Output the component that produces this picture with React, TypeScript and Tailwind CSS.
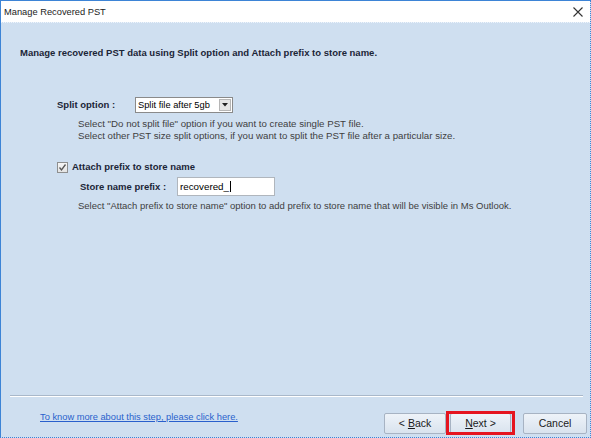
import React from "react";

const font = { fontFamily: '"Liberation Sans", Arial, sans-serif' };

function Btn({ children, w }: { children: React.ReactNode; w: string }) {
  return (
    <div
      className={`${w} h-[21px] flex items-center justify-center border border-[#a7b3c3] rounded-[2px] bg-gradient-to-b from-[#eef3f9] to-[#d9e3ee] text-[10.5px] text-[#1a1a1a]`}
    >
      {children}
    </div>
  );
}

export default function App() {
  return (
    <div
      style={font}
      className="w-[591px] h-[438px] flex flex-col bg-[#cfdff0] border-t border-l border-r border-b border-[#3d84d6] [border-right-style:dotted] [border-bottom-style:dotted] overflow-hidden"
    >
      {/* Title bar */}
      <div className="h-[21px] bg-white flex items-center justify-between pl-[3px] pr-[7px] shrink-0">
        <span className="text-[9.3px] leading-[12px] text-[#222]">Manage Recovered PST</span>
        <svg width="10" height="10" viewBox="0 0 10 10">
          <path d="M0.5 0.5 L9.5 9.5 M9.5 0.5 L0.5 9.5" stroke="#333" strokeWidth="1.1" fill="none" />
        </svg>
      </div>
      <div className="h-px shrink-0 border-b border-dotted border-[#eef4fb]" />

      {/* Body */}
      <div className="flex-1 flex flex-col">
        <div className="pt-[24px] pl-[19px] text-[9.5px] leading-[12px] font-bold text-[#1b2537]">
          Manage recovered PST data using Split option and Attach prefix to store name.
        </div>

        {/* Split option row */}
        <div className="mt-[38px] pl-[56px] flex items-center h-[16px]">
          <span className="w-[78px] text-[9.5px] font-bold text-[#1b2537] leading-[12px]">Split option :</span>
          <div className="w-[98px] h-[16px] bg-white border border-[#8a8a8a] flex items-center justify-between pl-[2px] pr-[1px]">
            <span className="text-[9.3px] leading-[12px] text-black">Split file after 5gb</span>
            <div className="w-[12px] h-[12px] bg-[#e6e6e6] border border-[#b5b5b5] flex items-center justify-center">
              <svg width="6" height="4" viewBox="0 0 6 4">
                <path d="M0 0 H6 L3 3.5 Z" fill="#222" />
              </svg>
            </div>
          </div>
        </div>

        <div className="mt-[5px] pl-[77px] text-[9.7px] leading-[11.5px] text-[#404040]">
          <div>Select "Do not split file" option if you want to create single PST file.</div>
          <div>Select other PST size split options, if you want to split the PST file after a particular size.</div>
        </div>

        {/* Attach prefix */}
        <div className="mt-[20px] pl-[56px] flex items-center h-[12px] gap-[4px]">
          <div className="w-[11px] h-[11px] border border-[#8e8f8f] bg-gradient-to-b from-[#f6f6f6] to-[#e4e4e4] flex items-center justify-center">
            <svg width="9" height="9" viewBox="0 0 9 9">
              <path d="M1.5 4.5 L3.5 7 L7.5 1.5" stroke="#555" strokeWidth="1.3" fill="none" />
            </svg>
          </div>
          <span className="text-[9.5px] font-bold text-[#1b2537] leading-[12px]">Attach prefix to store name</span>
        </div>

        <div className="mt-[4px] pl-[79px] flex items-center h-[19px]">
          <span className="w-[97px] text-[9.5px] font-bold text-[#1b2537] leading-[12px]">Store name prefix :</span>
          <div className="w-[98px] h-[19px] bg-white border border-[#b0b6bd] flex items-center pl-[2px]">
            <span className="text-[9.8px] leading-[12px] text-black">recovered_</span>
            <span className="w-px h-[11px] bg-black ml-[1px]" />
          </div>
        </div>

        <div className="mt-[4px] pl-[77px] text-[9.5px] leading-[12px] text-[#404040]">
          Select "Attach prefix to store name" option to add prefix to store name that will be visible in Ms Outlook.
        </div>

        <div className="flex-1" />

        {/* Separator */}
        <div className="ml-[9px] mr-[7px] h-px bg-[#a9b8ca]" />
        <div className="ml-[9px] mr-[7px] h-px bg-white" />

        {/* Footer */}
        <div className="h-[40px] flex items-start pl-[39px] pr-[3px]">
          <span className="mt-[14px] text-[9.3px] leading-[12px] text-[#2a5fcc] underline">
            To know more about this step, please click here.
          </span>
          <div className="ml-auto mt-[16px] flex items-center">
            <Btn w="w-[62px]">
              &lt; <span className="underline ml-[3px]">B</span>ack
            </Btn>
            <div className="relative ml-[4px]">
              <Btn w="w-[61px]">
                <span className="underline">N</span>ext &gt;
              </Btn>
              <div className="absolute -left-[4px] -top-[2px] w-[69px] h-[24px] border-[3px] border-[#e5141f]" />
            </div>
            <div className="ml-[12px]">
              <Btn w="w-[64px]">Cancel</Btn>
            </div>
          </div>
        </div>
      </div>
    </div>
  );
}
